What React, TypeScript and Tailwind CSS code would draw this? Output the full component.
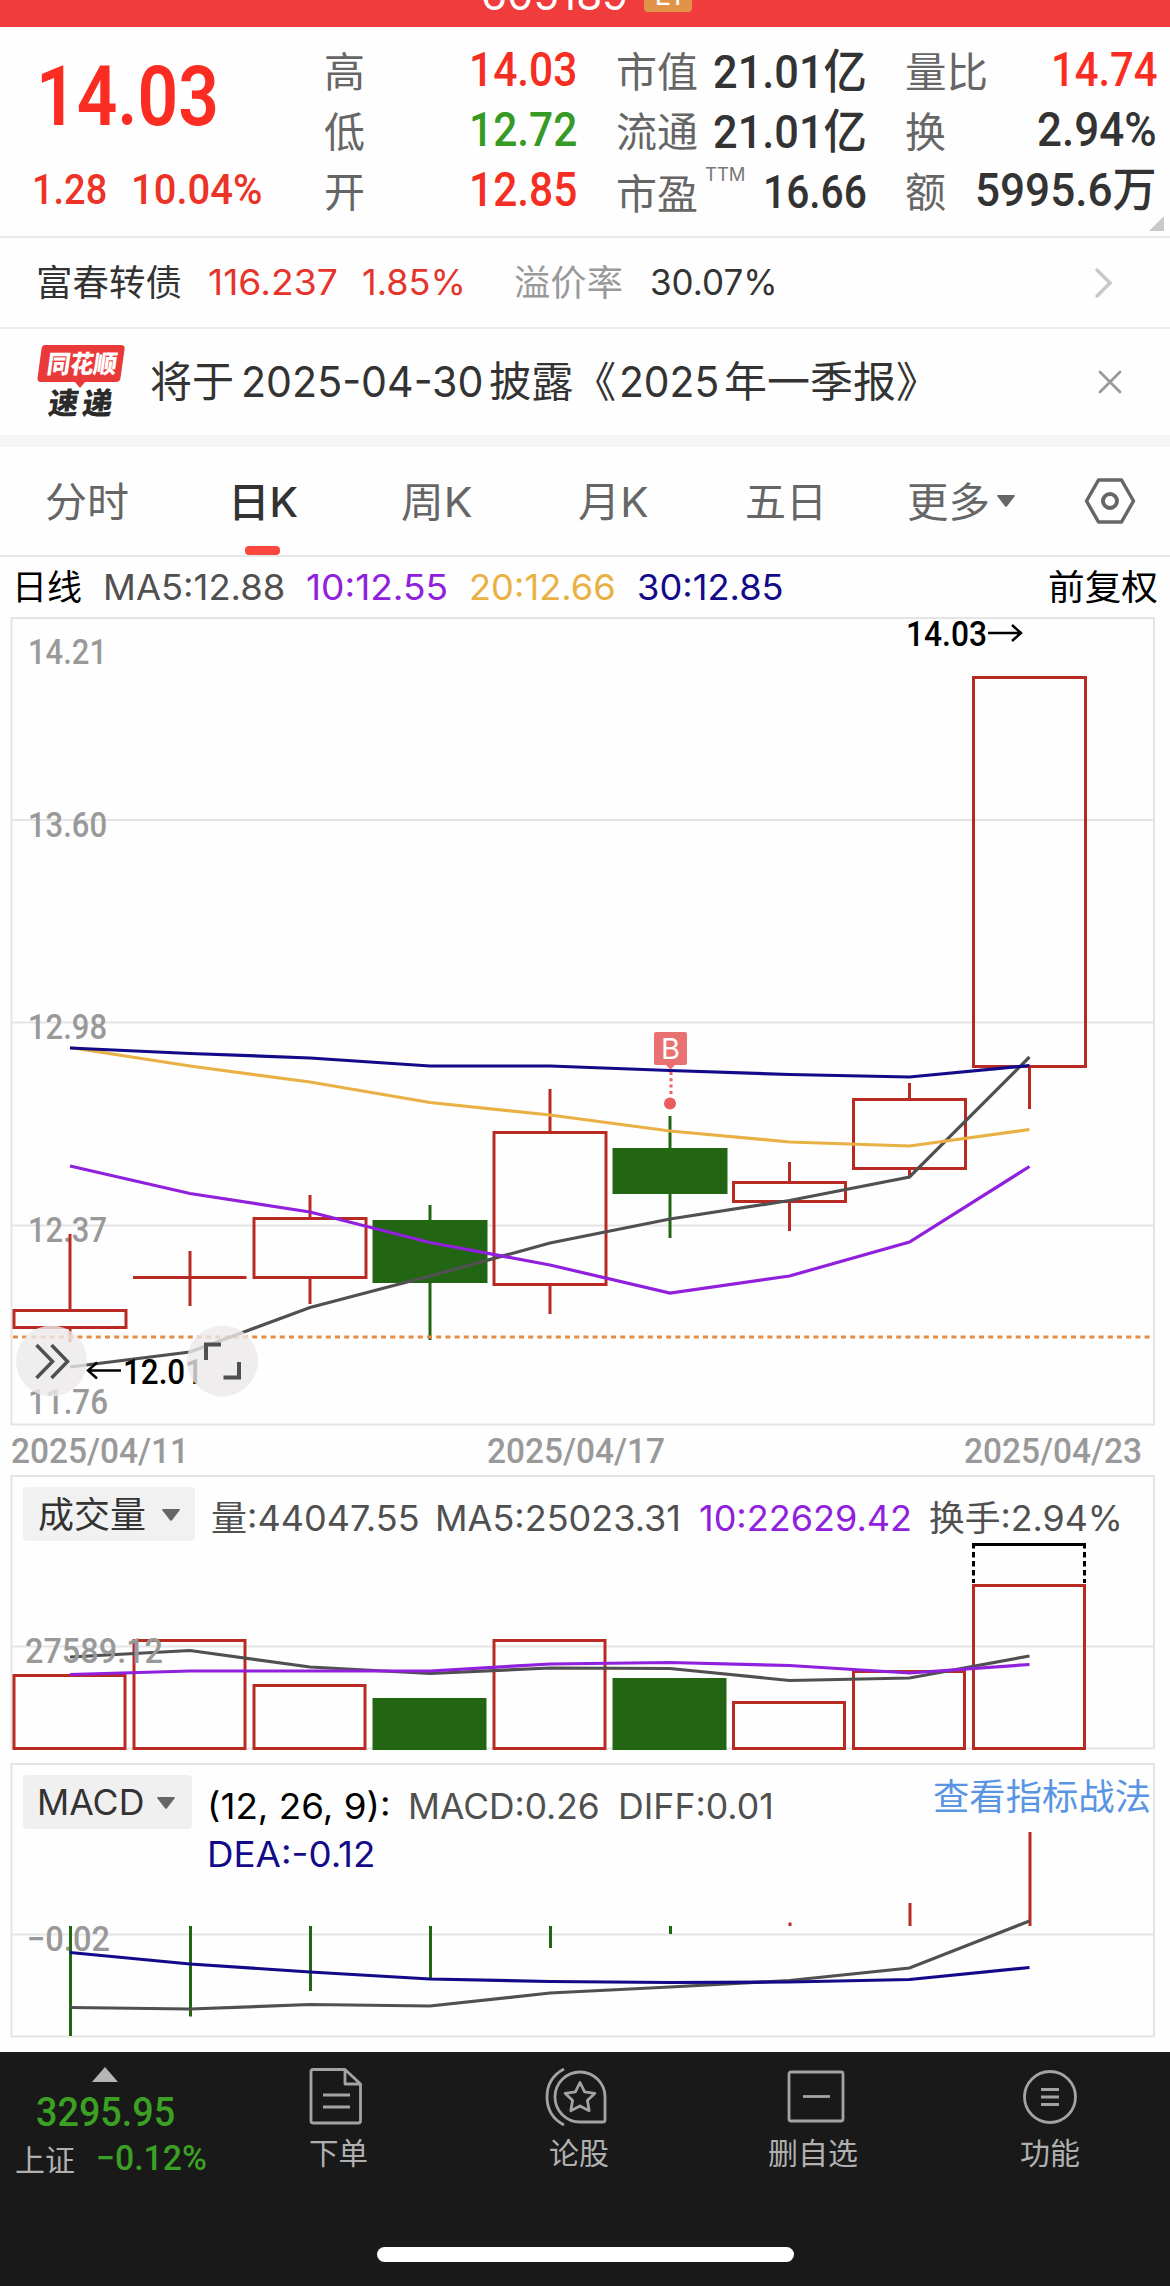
import { useLayoutEffect, useRef, useState } from "react";
import type { ReactNode } from "react";
import clsx from "clsx";

const RED = "#b82a22";
const GREEN = "#226614";
const GRAY = "#505050";
const PURPLE = "#9020dc";
const AMBER = "#e9b044";
const NAVY = "#120a88";
const LINE = "#e4e4e4";

// x of each trading day, 04/11 to 04/23
const days = [70, 190, 310, 430, 550, 670, 789.5, 909.5, 1029.5];

// top/bottom are the candle body, high/low the wick
const candles = [
  { top: 1309, bottom: 1329, high: 1234, low: 1342, up: true },
  { top: 1276, bottom: 1279, high: 1251, low: 1306, up: true },
  { top: 1217, bottom: 1279, high: 1195, low: 1304, up: true },
  { top: 1220, bottom: 1283, high: 1205, low: 1340, up: false },
  { top: 1131, bottom: 1286, high: 1089, low: 1314, up: true },
  { top: 1148, bottom: 1194, high: 1116, low: 1238, up: false },
  { top: 1181, bottom: 1203, high: 1162, low: 1231, up: true },
  { top: 1098, bottom: 1170, high: 1083, low: 1177, up: true },
  { top: 676, bottom: 1068, high: 676, low: 1109, up: true },
];

const priceLines = [
  { color: GRAY, values: [1367, 1352, 1307.5, 1276, 1243, 1219, 1200.5, 1177, 1057] },
  { color: AMBER, values: [1047.5, 1066, 1082, 1102.5, 1115, 1131, 1142, 1146, 1129.5] },
  { color: PURPLE, values: [1166, 1193.5, 1212, 1242.5, 1265, 1293, 1276, 1242, 1166.5] },
  { color: NAVY, values: [1048, 1053.5, 1058, 1066, 1066, 1070.5, 1074.5, 1077, 1065.5] },
];

const volumes = [
  { top: 1674, up: true },
  { top: 1639, up: true },
  { top: 1684, up: true },
  { top: 1698, up: false },
  { top: 1639, up: true },
  { top: 1678, up: false },
  { top: 1701, up: true },
  { top: 1670, up: true },
  { top: 1584, up: true },
];

const volumeLines = [
  { color: GRAY, values: [1657, 1650.5, 1667, 1673.5, 1668, 1668.5, 1680.5, 1678, 1656] },
  { color: PURPLE, values: [1674.5, 1671, 1671, 1671, 1664, 1662.5, 1665.5, 1673, 1664.5] },
];

const macdBars = [2036, 2016.5, 1991, 1979, 1948, 1934, 1922.5, 1903, 1832];

const macdLines = [
  { color: GRAY, values: [2007.5, 2009, 2004.5, 2006, 1993, 1987, 1980.5, 1968, 1921] },
  { color: NAVY, values: [1952.5, 1964, 1972, 1979, 1981.5, 1982.5, 1982, 1979.5, 1967.5] },
];

const tabs = [
  { label: "分时", className: "w-[84px] ml-[45px]" },
  { label: "日K", className: "w-[70px] ml-[99px]", active: true },
  { label: "周K", className: "w-[72px] ml-[103px]" },
  { label: "月K", className: "w-[71px] ml-[105px]" },
  { label: "五日", className: "w-[82px] ml-[96px]" },
  { label: "更多", className: "w-[83px] ml-[80px]" },
];

const numFont = "font-['Roboto','Noto_Sans_CJK_SC',sans-serif] font-medium";

// Squeezes or stretches one line of text to the width of its box
function Fit({ className, children }: { className?: string; children: ReactNode }) {
  const box = useRef<HTMLSpanElement>(null);
  const text = useRef<HTMLSpanElement>(null);
  const [scale, setScale] = useState(1);

  useLayoutEffect(() => {
    if (box.current && text.current) {
      setScale(box.current.clientWidth / text.current.offsetWidth);
    }
  }, []);

  return (
    <span ref={box} className={clsx("block shrink-0 whitespace-nowrap leading-none", className)}>
      <span ref={text} className="inline-block origin-left" style={{ transform: `scaleX(${scale})` }}>
        {children}
      </span>
    </span>
  );
}

function AxisText({ x, y, w, color = "#999", children }: { x: number; y: number; w: number; color?: string; children: string }) {
  return (
    <text
      x={x}
      y={y}
      textLength={w}
      lengthAdjust="spacingAndGlyphs"
      fill={color}
      className="font-['Roboto',sans-serif] text-[35px] font-medium"
    >
      {children}
    </text>
  );
}

function Lines({ series }: { series: { color: string; values: number[] }[] }) {
  return (
    <>
      {series.map((s, i) => (
        <polyline
          key={i}
          points={s.values.map((v, d) => `${days[d]},${v}`).join(" ")}
          fill="none"
          stroke={s.color}
          strokeWidth="3.2"
        />
      ))}
    </>
  );
}

function Caret({ className }: { className?: string }) {
  return (
    <svg viewBox="0 0 18 12" className={clsx("h-[12px] w-[18px] shrink-0", className)}>
      <path d="M1 0H17Q18.500 0 17.500 1.500L10 11.200Q9 12.300 8 11.200L.5 1.500Q-.5 0 1 0Z" fill="#666" />
    </svg>
  );
}

function Header() {
  return (
    <header className="relative h-[27px] overflow-hidden bg-[#f03c3d] text-white">
      <div className="absolute -top-[26px] left-[481px] flex items-start">
        <Fit className="w-[147px] text-[42px]">605189</Fit>
        <span className="ml-[16px] flex h-[38px] w-[48px] items-end justify-center rounded-[4px] bg-[#e09448] pb-[3px] text-[29px] leading-none">
          L1
        </span>
      </div>
    </header>
  );
}

function Quote() {
  return (
    <section className="relative flex h-[211px] border-b-2 border-[#e9e9e9] pt-[12px] text-[#333]">
      <div className={clsx("w-[322px] text-[#fb2d22]", numFont)}>
        <div className="flex h-[116px] items-center pl-[36px]">
          <Fit className="w-[183px] text-[84px] font-semibold">14.03</Fit>
        </div>
        <div className="flex h-[69px] items-center pl-[32px] text-[43px] text-[#ec3328]">
          <Fit className="w-[75px]">1.28</Fit>
          <Fit className="ml-[24px] w-[131px]">10.04%</Fit>
        </div>
      </div>

      <div className="w-[255px]">
        <div className="flex h-[60px] items-center justify-between">
          <span className="mt-[6px] pl-[2px] text-[41px] leading-none text-[#666]">高</span>
          <Fit className={clsx("mt-[2px] w-[108px] text-[48px] text-[#f52e24]", numFont)}>14.03</Fit>
        </div>
        <div className="flex h-[60px] items-center justify-between">
          <span className="mt-[6px] pl-[2px] text-[41px] leading-none text-[#666]">低</span>
          <Fit className={clsx("mt-[2px] w-[108px] text-[48px] text-[#379a25]", numFont)}>12.72</Fit>
        </div>
        <div className="flex h-[60px] items-center justify-between">
          <span className="mt-[6px] pl-[2px] text-[41px] leading-none text-[#666]">开</span>
          <Fit className={clsx("mt-[2px] w-[108px] text-[48px] text-[#f52e24]", numFont)}>12.85</Fit>
        </div>
      </div>

      <div className="ml-[39px] w-[251px]">
        <div className="flex h-[60px] items-center justify-between">
          <Fit className="mt-[6px] w-[82px] text-[41px] text-[#666]">市值</Fit>
          <Fit className={clsx("mt-[4px] w-[154px] text-[47px]", numFont)}>21.01亿</Fit>
        </div>
        <div className="flex h-[60px] items-center justify-between">
          <Fit className="mt-[6px] w-[82px] text-[41px] text-[#666]">流通</Fit>
          <Fit className={clsx("mt-[4px] w-[154px] text-[47px]", numFont)}>21.01亿</Fit>
        </div>
        <div className="flex h-[60px] items-center">
          <Fit className="mt-[10px] w-[82px] text-[41px] text-[#666]">市盈</Fit>
          <Fit className="mb-[28px] ml-[7px] w-[41px] text-[18px] text-[#777]">TTM</Fit>
          <Fit className={clsx("mt-[4px] ml-auto w-[104px] text-[47px]", numFont)}>16.66</Fit>
        </div>
      </div>

      <div className="ml-[38px] w-[252px]">
        <div className="flex h-[60px] items-center justify-between">
          <Fit className="mt-[6px] w-[83px] text-[41px] text-[#666]">量比</Fit>
          <Fit className={clsx("mt-[2px] w-[106px] text-[48px] text-[#fb2d22]", numFont)}>14.74</Fit>
        </div>
        <div className="flex h-[60px] items-center justify-between">
          <span className="mt-[6px] text-[41px] leading-none text-[#666]">换</span>
          <Fit className={clsx("mt-[2px] w-[120px] text-[48px]", numFont)}>2.94%</Fit>
        </div>
        <div className="flex h-[60px] items-center justify-between">
          <span className="mt-[6px] text-[41px] leading-none text-[#666]">额</span>
          <Fit className={clsx("mt-[1px] w-[182px] text-[47px]", numFont)}>5995.6万</Fit>
        </div>
      </div>

      <svg viewBox="0 0 15 15" className="absolute right-[6px] bottom-[5px] size-[15px]">
        <path d="M15 0V15H0Z" fill="#c9c9c9" />
      </svg>
    </section>
  );
}

function BondRow() {
  return (
    <section className="flex h-[91px] items-center border-b-2 border-[#ebebeb] pl-[36px] text-[35px] text-[#333]">
      <Fit className="w-[146px] text-[36px]">富春转债</Fit>
      <Fit className="ml-[26px] w-[130px] text-[#e6342b]">116.237</Fit>
      <Fit className="ml-[24px] w-[104px] text-[#e6342b]">1.85%</Fit>
      <Fit className="ml-[48px] w-[109px] text-[36px] text-[#999]">溢价率</Fit>
      <Fit className="ml-[27px] w-[128px]">30.07%</Fit>
      <svg viewBox="0 0 20 32" className="mr-[56px] ml-auto h-[32px] w-[20px]" fill="none" stroke="#c8c8c8" strokeWidth="3.500" strokeLinecap="round">
        <path d="M3 3L16 16L3 29" />
      </svg>
    </section>
  );
}

function NewsRow() {
  return (
    <section className="flex h-[106px] items-center pl-[37px] text-[42px] text-[#333]">
      <svg viewBox="0 0 88 76" className="h-[76px] w-[88px] shrink-0 overflow-visible font-['Noto_Sans_CJK_SC',sans-serif] font-black">
        <path d="M8 1H84Q88 1 87.600 5L83.500 34Q83 38 79 38H48L43 44L38 38H4Q0 38 .5 34L4.500 5Q5 1 8 1Z" fill="#e93a39" />
        <g transform="skewX(-8)">
          <text x="13" y="29" textLength="70" lengthAdjust="spacingAndGlyphs" fontSize="25" fill="#fff">
            同花顺
          </text>
          <text x="20" y="70" fontSize="30" fill="#2b2b2b">
            速
          </text>
          <text x="54" y="70" fontSize="30" fill="#2b2b2b">
            递
          </text>
        </g>
      </svg>
      <Fit className="ml-[25px] w-[84px]">将于</Fit>
      <Fit className="ml-[7px] w-[243px]">2025-04-30</Fit>
      <Fit className="ml-[5px] w-[127px]">披露《</Fit>
      <Fit className="ml-[3px] w-[100px]">2025</Fit>
      <Fit className="ml-[5px] w-[215px]">年一季报》</Fit>
      <svg viewBox="0 0 24 24" className="mr-[48px] ml-auto size-[24px]" fill="none" stroke="#999" strokeWidth="2.800" strokeLinecap="round">
        <path d="M2 2L22 22M22 2L2 22" />
      </svg>
    </section>
  );
}

function Tabs() {
  return (
    <nav className="flex h-[110px] items-stretch border-b-2 border-[#e8e8e8] text-[41px] text-[#666]">
      {tabs.map((tab) => (
        <div
          key={tab.label}
          className={clsx("relative flex items-center pt-[2px]", tab.className, tab.active && "font-medium text-[#333]")}
        >
          <Fit className="w-full">{tab.label}</Fit>
          {tab.active && (
            <span className="absolute bottom-0 left-[17px] h-[9px] w-[35px] rounded-[4px] bg-[#fb4740]" />
          )}
        </div>
      ))}
      <Caret className="ml-[7px] self-center" />
      <svg viewBox="0 0 52 48" className="mr-[34px] ml-auto h-[48px] w-[52px] self-center" fill="none" stroke="#666" strokeLinejoin="round">
        <path d="M14.500 3H37.500L49.500 24L37.500 45H14.500L2.500 24Z" strokeWidth="3.500" />
        <circle cx="26" cy="24" r="7" strokeWidth="4" />
      </svg>
    </nav>
  );
}

function PriceChart() {
  return (
    <section>
      <div className="flex h-[60px] items-center pl-[12px] text-[35px] text-[#505050]">
        <Fit className="w-[70px] text-black">日线</Fit>
        <Fit className="ml-[21px] w-[182px]">MA5:12.88</Fit>
        <Fit className="ml-[21px] w-[142px] text-[#9020dc]">10:12.55</Fit>
        <Fit className="ml-[21px] w-[147px] text-[#e9b044]">20:12.66</Fit>
        <Fit className="ml-[21px] w-[147px] text-[#120a88]">30:12.85</Fit>
        <Fit className="mr-[12px] ml-auto w-[110px] text-black">前复权</Fit>
      </div>
      <svg viewBox="0 617 1170 858" className="block h-[858px] w-full">
        <path d="M11.500 618H1154V1424.500H11.500ZM11.500 820H1154M11.500 1022.500H1154M11.500 1225.500H1154" fill="none" stroke={LINE} strokeWidth="2" />

        <AxisText x={28} y={664} w={79}>14.21</AxisText>
        <AxisText x={28} y={836.5} w={79}>13.60</AxisText>
        <AxisText x={28} y={1039} w={79}>12.98</AxisText>
        <AxisText x={28} y={1241.5} w={79}>12.37</AxisText>
        <AxisText x={28} y={1414} w={80}>11.76</AxisText>

        {candles.map((c, i) => {
          const x = days[i];
          const color = c.up ? RED : GREEN;
          return (
            <g key={i} stroke={color} strokeWidth="3">
              <path d={`M${x} ${c.high}V${c.top}M${x} ${c.bottom}V${c.low}`} />
              {c.bottom - c.top > 3 ? (
                <rect
                  x={x - 56}
                  y={c.top + 1.5}
                  width="112"
                  height={c.bottom - c.top - 3}
                  fill={c.up ? "none" : GREEN}
                />
              ) : (
                <path d={`M${x - 57} ${c.top + 1.5}H${x + 56.5}`} />
              )}
            </g>
          );
        })}

        <path d="M13 1337H1151" stroke="#e58c42" strokeWidth="3" strokeDasharray="5 4.200" />
        <Lines series={priceLines} />

        {/* buy marker */}
        <g>
          <path d="M656 1032H685Q687 1032 687 1034V1063Q687 1065 685 1065H675L670.500 1069.500L666 1065H656Q654 1065 654 1063V1034Q654 1032 656 1032Z" fill="#e97171" />
          <text x="670.500" y="1058.500" textAnchor="middle" fontSize="29" fill="#fff">
            B
          </text>
          <path d="M671 1072V1094" stroke="#e85f66" strokeWidth="3" strokeDasharray="3 3.300" />
          <circle cx="670" cy="1103.500" r="6" fill="#e85c5c" />
        </g>

        <AxisText x={906} y={646} w={81} color="#000">14.03</AxisText>
        <path d="M988 633H1021M1012 625L1021 633L1012 641" fill="none" stroke="#000" strokeWidth="2.500" />
        <AxisText x={123} y={1383.5} w={80} color="#000">12.01</AxisText>
        <path d="M121 1370.500H88M97 1362.500L88 1370.500L97 1378.500" fill="none" stroke="#000" strokeWidth="2.500" />

        <g fill="#ebe9ea" fillOpacity="0.8">
          <circle cx="51.500" cy="1361" r="35.500" />
          <circle cx="222.500" cy="1361" r="35.500" />
        </g>
        <g fill="none" stroke="#505050" strokeWidth="3.500">
          <path d="M36.500 1345L52.500 1361.500L36.500 1378M51.500 1345L67.500 1361.500L51.500 1378" />
          <path d="M206 1360V1344.500H221M223.500 1377.500H239V1362" strokeWidth="4" />
        </g>

        <AxisText x={11} y={1463} w={178}>2025/04/11</AxisText>
        <AxisText x={487} y={1463} w={178}>2025/04/17</AxisText>
        <AxisText x={964} y={1463} w={178}>2025/04/23</AxisText>
      </svg>
    </section>
  );
}

function VolumeChart() {
  return (
    <section className="relative h-[288px]">
      <svg viewBox="0 1475 1170 288" className="absolute inset-0 h-[288px] w-full">
        <path d="M11.500 1476H1154V1748.500H11.500ZM11.500 1646.500H1154" fill="none" stroke={LINE} strokeWidth="2" />
        {volumes.map((v, i) => (
          <rect
            key={i}
            x={days[i] - 56}
            y={v.top + 1.5}
            width="111"
            height={1748.5 - v.top - 1.5}
            fill={v.up ? "none" : GREEN}
            stroke={v.up ? RED : GREEN}
            strokeWidth="3"
          />
        ))}
        <path d="M972 1544.500H1086" stroke="#000" strokeWidth="3" />
        <path d="M973.500 1543V1583M1084.500 1543V1583" stroke="#000" strokeWidth="3" strokeDasharray="5.500 3.500" />
        <Lines series={volumeLines} />
        <AxisText x={25} y={1662.5} w={138}>27589.12</AxisText>
      </svg>
      <div className="relative flex pt-[12px] pl-[23px] text-[35px] text-[#505050]">
        <button className="flex h-[54px] w-[172px] items-center rounded-[4px] bg-[#f1f1f1] pt-[1px] pl-[15px] text-[#333]">
          <Fit className="w-[108px] text-[36px]">成交量</Fit>
          <Caret className="ml-[16px]" />
        </button>
        <div className="flex h-[62px] items-center">
          <Fit className="ml-[16px] w-[209px]">量:44047.55</Fit>
          <Fit className="ml-[15px] w-[246px]">MA5:25023.31</Fit>
          <Fit className="ml-[18px] w-[213px] text-[#9020dc]">10:22629.42</Fit>
          <Fit className="ml-[17px] w-[194px]">换手:2.94%</Fit>
        </div>
      </div>
    </section>
  );
}

function MacdChart() {
  return (
    <section className="relative h-[289px]">
      <svg viewBox="0 1763 1170 289" className="absolute inset-0 h-[289px] w-full">
        <path d="M11.500 1764H1154V2036.500H11.500ZM11.500 1934.500H1154" fill="none" stroke={LINE} strokeWidth="2" />
        <AxisText x={27} y={1950.5} w={83}>−0.02</AxisText>
        {macdBars.map((y, i) => (
          <path key={i} d={`M${days[i] + 0.5} 1926V${y}`} stroke={y > 1926 ? GREEN : RED} strokeWidth="3" />
        ))}
        <Lines series={macdLines} />
      </svg>
      <div className="relative flex pt-[12px] pl-[23px] text-[35px] text-[#505050]">
        <button className="flex h-[54px] w-[169px] items-center rounded-[4px] bg-[#f1f0f1] pt-[1px] pl-[13px] text-[#333]">
          <Fit className="w-[107px]">MACD</Fit>
          <Caret className="ml-[14px]" />
        </button>
        <div className="pl-[15px]">
          <div className="flex h-[62px] items-center pt-[1px]">
            <Fit className="w-[184px] text-black">(12, 26, 9):</Fit>
            <Fit className="ml-[17px] w-[192px]">MACD:0.26</Fit>
            <Fit className="ml-[18px] w-[156px]">DIFF:0.01</Fit>
          </div>
          <div className="flex h-[35px] items-center">
            <Fit className="w-[168px] text-[#120a88]">DEA:-0.12</Fit>
          </div>
        </div>
        <Fit className="mt-[4px] mr-[19px] ml-auto w-[218px] text-[36px] text-[#5a95e4]">查看指标战法</Fit>
      </div>
    </section>
  );
}

function Footer() {
  return (
    <footer className="flex h-[234px] flex-col bg-[#191919] text-[#b0b0b0]">
      <div className="flex h-[195px]">
        <div className="w-[250px]">
          <svg viewBox="0 0 26 15" className="mt-[15px] ml-[92px] h-[15px] w-[26px]">
            <path d="M13 0L26 15H0Z" fill="#b5b5b5" />
          </svg>
          <Fit className={clsx("mt-[10px] ml-[36px] w-[139px] text-[41px] text-[#3ba023]", numFont)}>3295.95</Fit>
          <div className="mt-[8px] flex items-center pl-[15px]">
            <Fit className="mt-[3px] w-[60px] text-[30px]">上证</Fit>
            <Fit className={clsx("ml-[21px] w-[111px] text-[35px] text-[#3ba023]", numFont)}>−0.12%</Fit>
          </div>
        </div>

        <div className="ml-[23px] flex w-[130px] flex-col items-center pt-[15px]">
          <svg viewBox="0 0 54 60" className="mr-[5px] h-[60px] w-[54px]" fill="none" stroke="#a3a3a3" strokeWidth="2.800" strokeLinejoin="round">
            <path d="M4 2.500H36L51.500 17V54Q51.500 56 49.500 56H4Q2 56 2 54V4.500Q2 2.500 4 2.500ZM36 2.500V17H51.500M14 28H41M14 40H41" />
          </svg>
          <Fit className="mt-[11px] w-[59px] text-[30px]">下单</Fit>
        </div>

        <div className="ml-[111px] flex w-[130px] flex-col items-center pt-[15px]">
          <svg viewBox="0 0 62 60" className="mr-[6px] h-[60px] w-[62px]" fill="none" stroke="#a3a3a3" strokeWidth="2.800" strokeLinejoin="round">
            <path d="M19 2Q2 11 2 30Q2 49 19 58" />
            <path d="M35 5A25 25 0 0 0 35 55H58Q60 55 60 53V30A25 25 0 0 0 35 5Z" />
            <path d="M35 15.500L39.600 24.800L49.900 26.300L42.400 33.500L44.200 43.700L35 38.900L25.800 43.700L27.600 33.500L20.100 26.300L30.400 24.800Z" />
          </svg>
          <Fit className="mt-[11px] w-[60px] text-[30px]">论股</Fit>
        </div>

        <div className="ml-[104px] flex w-[130px] flex-col items-center pt-[15px]">
          <svg viewBox="0 0 58 60" className="ml-[5px] h-[60px] w-[58px]" fill="none" stroke="#a3a3a3" strokeWidth="2.800" strokeLinejoin="round">
            <rect x="2" y="5" width="54" height="49" rx="2" />
            <path d="M16 29.500H43" />
          </svg>
          <Fit className="mt-[11px] w-[90px] text-[30px]">删自选</Fit>
        </div>

        <div className="ml-[107px] flex w-[130px] flex-col items-center pt-[15px]">
          <svg viewBox="0 0 58 60" className="h-[60px] w-[58px]" fill="none" stroke="#a3a3a3" strokeWidth="2.800">
            <circle cx="29" cy="30" r="25.500" />
            <path d="M20 22.500H38M20 30H38M20 37.500H38" />
          </svg>
          <Fit className="mt-[11px] w-[60px] text-[30px]">功能</Fit>
        </div>
      </div>
      <div className="mx-auto h-[15px] w-[417px] rounded-full bg-white" />
    </footer>
  );
}

export default function App() {
  return (
    <div className="h-[2286px] w-[1170px] overflow-hidden bg-[#fefefe] font-['Inter','Noto_Sans_CJK_SC',sans-serif]">
      <Header />
      <Quote />
      <BondRow />
      <NewsRow />
      <div className="h-[12px] bg-[#f5f5f5]" />
      <Tabs />
      <PriceChart />
      <VolumeChart />
      <MacdChart />
      <Footer />
    </div>
  );
}
